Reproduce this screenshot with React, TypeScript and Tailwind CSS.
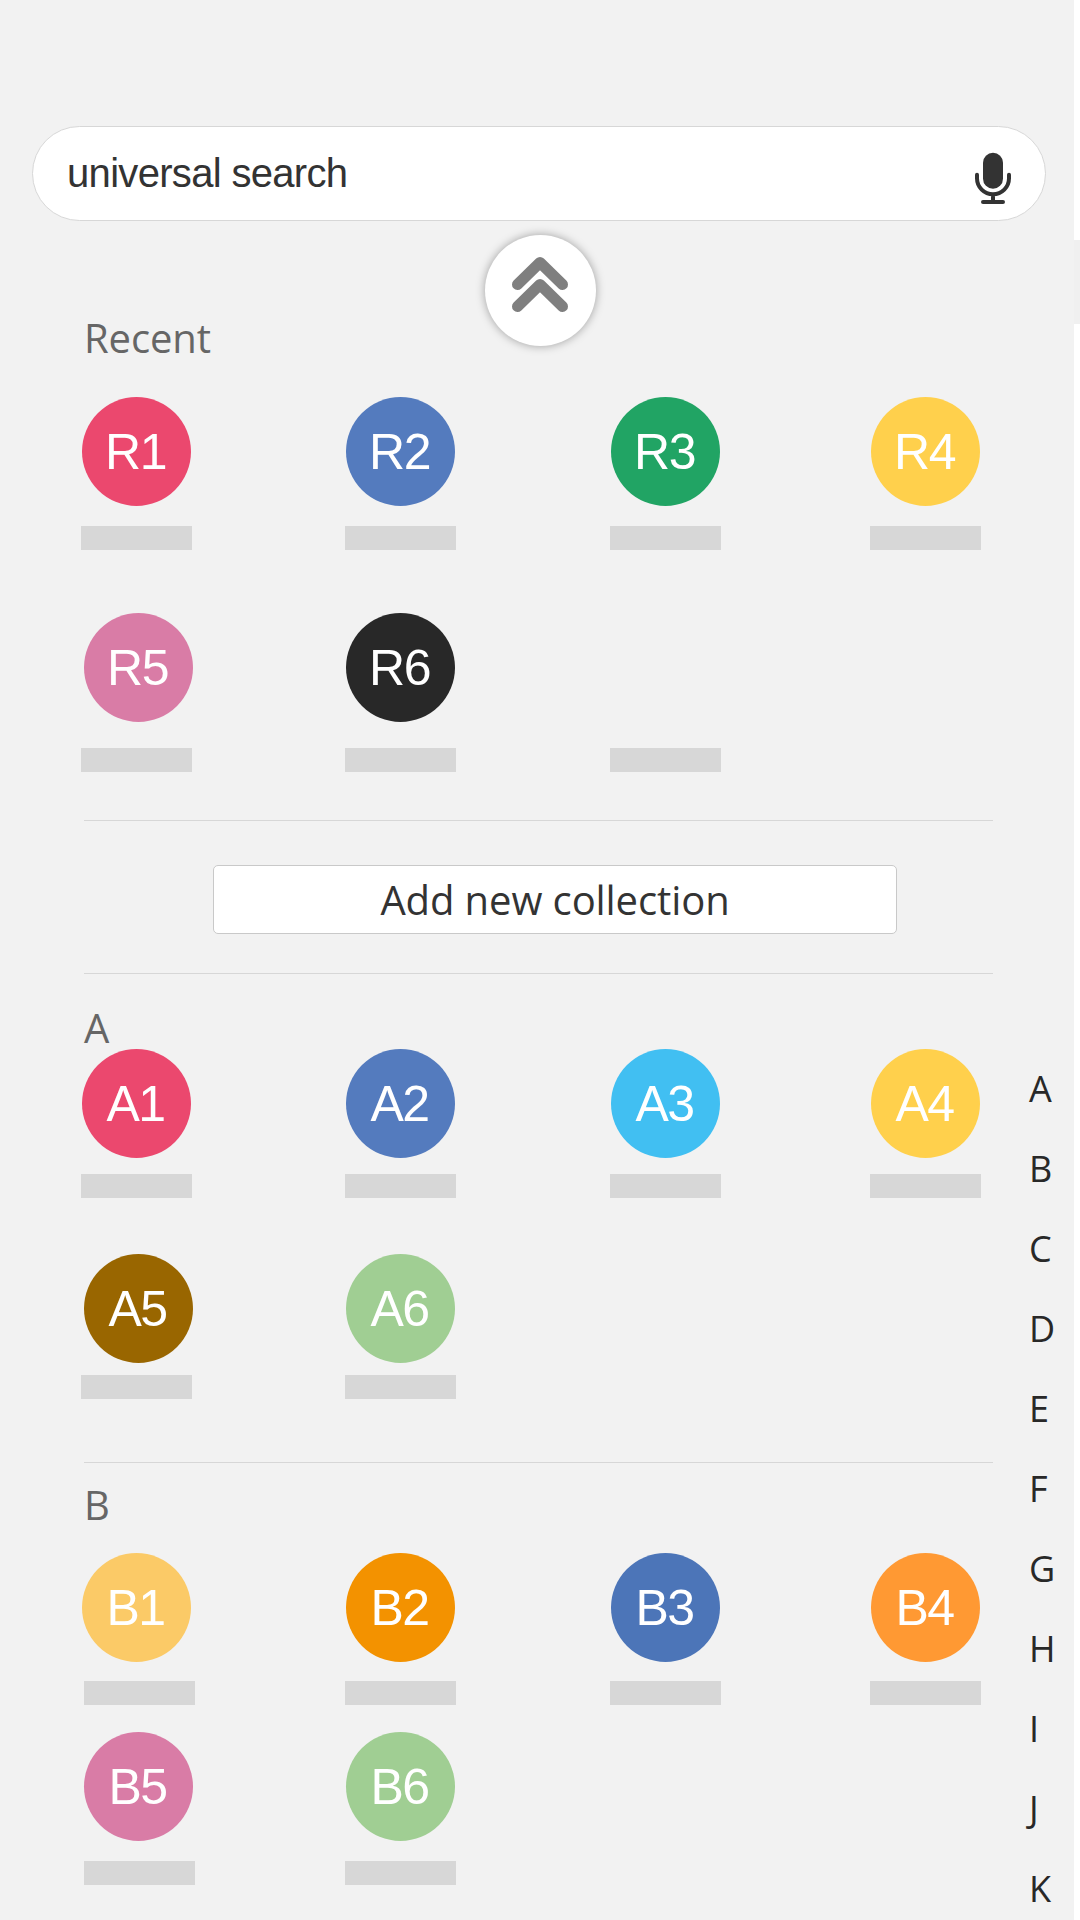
type Item = { label?: string; color?: string; nudge?: boolean; barNudge?: boolean };

const recentTop: Item[] = [
  { label: "R1", color: "bg-[#eb486e]" },
  { label: "R2", color: "bg-[#547bbe]" },
  { label: "R3", color: "bg-[#21a464]" },
  { label: "R4", color: "bg-[#ffd04c]" },
];
const recentBottom: Item[] = [
  { label: "R5", color: "bg-[#d97ca6]", nudge: true },
  { label: "R6", color: "bg-[#282828]" },
  {},
];
const aTop: Item[] = [
  { label: "A1", color: "bg-[#eb486e]" },
  { label: "A2", color: "bg-[#547bbe]" },
  { label: "A3", color: "bg-[#41bff2]" },
  { label: "A4", color: "bg-[#ffd04c]" },
];
const aBottom: Item[] = [
  { label: "A5", color: "bg-[#996600]", nudge: true },
  { label: "A6", color: "bg-[#a0ce93]" },
];
const bTop: Item[] = [
  { label: "B1", color: "bg-[#fbca67]", barNudge: true },
  { label: "B2", color: "bg-[#f39200]" },
  { label: "B3", color: "bg-[#4c75b8]" },
  { label: "B4", color: "bg-[#ff9933]" },
];
const bBottom: Item[] = [
  { label: "B5", color: "bg-[#d97ca6]", nudge: true, barNudge: true },
  { label: "B6", color: "bg-[#a0ce93]" },
];

const letters = ["A", "B", "C", "D", "E", "F", "G", "H", "I", "J", "K"];

function Row({ items, gap, className }: { items: Item[]; gap: string; className: string }) {
  return (
    <div className={`grid grid-cols-[264px_265px_260px_111px] pl-[81px] ${className}`}>
      {items.map((it, i) => (
        <div key={i} className={`flex flex-col items-start ${gap}`}>
          <div
            className={`flex size-[109px] items-center justify-center rounded-full pt-px pr-[2px] text-[50px] leading-[56px] tracking-[-1.5px] text-white ${it.color ?? ""} ${it.nudge ? "ml-[3px]" : "ml-px"}`}
          >
            {it.label}
          </div>
          <div className={`h-6 w-[111px] bg-[#d7d7d7] ${it.barNudge ? "ml-[3px]" : ""}`} />
        </div>
      ))}
    </div>
  );
}

function Heading({ children, className }: { children: string; className: string }) {
  return (
    <h2 className={`ml-[84px] h-10 font-['Open_Sans',sans-serif] text-[40px] leading-[42px] tracking-[-0.1px] text-[#666666] ${className}`}>
      {children}
    </h2>
  );
}

function Divider({ className }: { className: string }) {
  return <div className={`ml-[84px] h-px w-[909px] bg-[#d7d7d7] ${className}`} />;
}

function MicIcon() {
  return (
    <svg width="36" height="52" viewBox="0 0 36 52" fill="none">
      <rect x="8" y="0.7" width="20" height="36" rx="10" fill="#333333" />
      <path d="M2 22.7v3.6a16 16 0 0 0 32 0v-3.6M18 42.3V50M8 50h20" stroke="#333333" strokeWidth="4" strokeLinecap="round" />
    </svg>
  );
}

export default function App() {
  return (
    <div className="flex h-[1920px] w-[1080px] overflow-hidden bg-white font-['Liberation_Sans',Arial,sans-serif]">
      <main className="relative flex h-full w-[1074px] flex-col bg-[#f2f2f2]">
        <div className="mt-[126px] ml-8 flex h-[95px] w-[1014px] shrink-0 items-start justify-between rounded-full border border-[#d7d7d7] bg-white pr-[34px] pl-[34px]">
          <span className="mt-[23px] text-[40px] leading-[46px] tracking-[-0.68px] text-[#333333]">universal search</span>
          <div className="mt-[25px]">
            <MicIcon />
          </div>
        </div>

        <button
          aria-label="Scroll up"
          className="absolute top-[235px] left-[485px] size-[111px] rounded-full bg-white shadow-[0_0_10px_rgba(0,0,0,0.35)]"
        >
          <svg width="111" height="111" viewBox="0 0 111 111" fill="none" stroke="#7f7f7f" strokeWidth="11" strokeLinecap="round" strokeLinejoin="round">
            <path d="M32.5 49.5L55 27.5L77.5 49.5" />
            <path d="M32.5 71.5L55 49.5L77.5 71.5" />
          </svg>
        </button>

        <div className="flex min-h-0 flex-1">
          <div className="w-[1029px] shrink-0">
            <Heading className="mt-[96px]">Recent</Heading>
            <Row items={recentTop} gap="gap-5" className="mt-[40px]" />
            <Row items={recentBottom} gap="gap-[26px]" className="mt-[63px]" />
            <Divider className="mt-[48px]" />
            <button className="mt-[44px] ml-[213px] block h-[69px] w-[684px] rounded-[5px] border border-[#c9c9c9] bg-white font-['Open_Sans',sans-serif] text-[40px] leading-[67px] tracking-[-0.1px] text-[#333333]">
              Add new collection
            </button>
            <Divider className="mt-[39px]" />
            <Heading className="mt-[33px]">A</Heading>
            <Row items={aTop} gap="gap-4" className="mt-[2px]" />
            <Row items={aBottom} gap="gap-3" className="mt-[56px]" />
            <Divider className="mt-[63px]" />
            <Heading className="mt-[21px]">B</Heading>
            <Row items={bTop} gap="gap-[19px]" className="mt-[29px]" />
            <Row items={bBottom} gap="gap-5" className="mt-[27px]" />
          </div>
          <nav className="mt-[828px] flex flex-col font-['Open_Sans',sans-serif] text-[36px] leading-[80px] text-[#282828]">
            {letters.map((l) => (
              <span key={l} className="h-20">
                {l}
              </span>
            ))}
          </nav>
        </div>
      </main>
      <div className="mt-[240px] h-[84px] w-[6px] bg-[#f0f0f0]" />
    </div>
  );
}
